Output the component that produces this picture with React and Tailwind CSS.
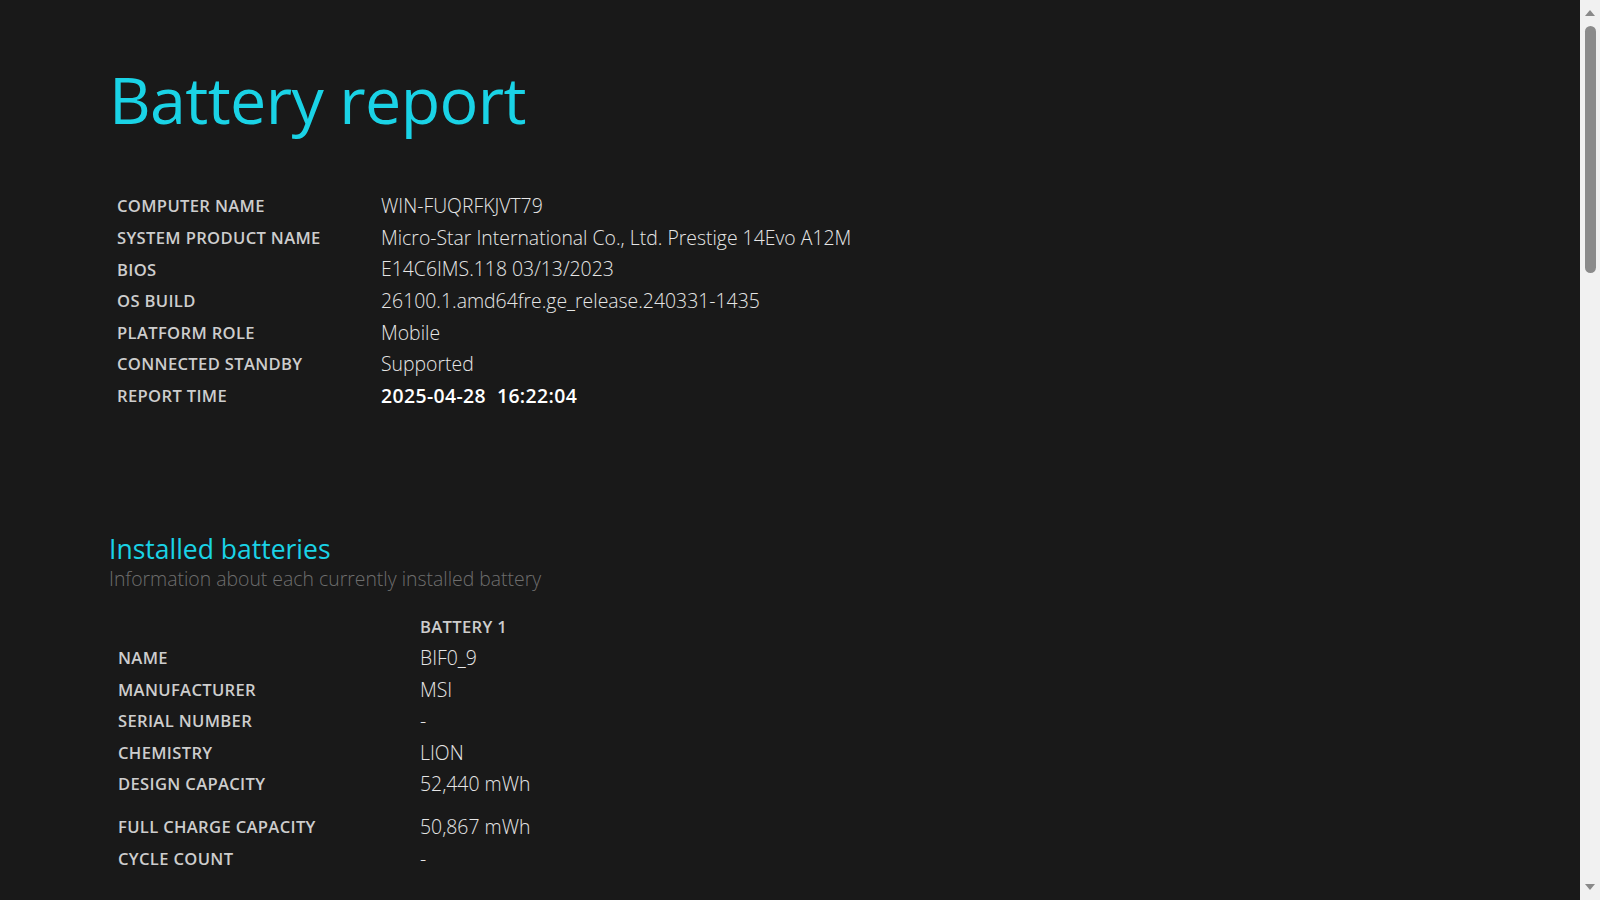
import React from 'react'

const systemInfo = [
    ['COMPUTER NAME', 'WIN-FUQRFKJVT79'],
    ['SYSTEM PRODUCT NAME', 'Micro-Star International Co., Ltd. Prestige 14Evo A12M'],
    ['BIOS', 'E14C6IMS.118 03/13/2023'],
    ['OS BUILD', '26100.1.amd64fre.ge_release.240331-1435'],
    ['PLATFORM ROLE', 'Mobile'],
    ['CONNECTED STANDBY', 'Supported'],
]

const batteryInfo = [
    ['NAME', 'BIF0_9'],
    ['MANUFACTURER', 'MSI'],
    ['SERIAL NUMBER', '-'],
    ['CHEMISTRY', 'LION'],
    ['DESIGN CAPACITY', '52,440 mWh'],
]

function Label({ children }) {
    return (
        <div className="pt-[2px] text-[16.6px] font-semibold tracking-[0.02em] text-[#cdcdcd]">
            {children}
        </div>
    )
}

function Value({ children, strong }) {
    return (
        <div className={strong ? 'text-[19.4px] font-semibold tracking-[0.02em] text-white' : 'text-[19.4px] font-light text-[#e6e6e6]'}>
            {children}
        </div>
    )
}

function Scrollbar() {
    return (
        <div className="w-[20px] h-full bg-[#f1f1f1] flex flex-col items-center">
            <div className="h-[26px] flex items-center justify-center">
                <div className="w-0 h-0 border-l-[5px] border-r-[5px] border-b-[6px] border-l-transparent border-r-transparent border-b-[#8a8a8a]" />
            </div>
            <div className="w-[11px] h-[247px] rounded-full bg-[#8b8b8b]" />
            <div className="flex-1" />
            <div className="h-[26px] flex items-center justify-center">
                <div className="w-0 h-0 border-l-[5px] border-r-[5px] border-t-[6px] border-l-transparent border-r-transparent border-t-[#8a8a8a]" />
            </div>
        </div>
    )
}

export default function App() {
    return (
        <div className="w-full h-screen flex overflow-hidden bg-[#191919]" style={{ fontFamily: '"Open Sans", "Noto Sans", sans-serif' }}>
            <div className="flex-1 pl-[109px] pt-[54px]">
                <h1 className="text-[64.6px] font-normal leading-[90px] text-[#1ad3e6] tracking-[-0.01em]">
                    Battery report
                </h1>

                <div className="mt-[46px] pl-[8px] grid grid-cols-[264px_1fr] auto-rows-[31.6px] items-center">
                    {systemInfo.map(([k, v]) => (
                        <React.Fragment key={k}>
                            <Label>{k}</Label>
                            <Value>{v}</Value>
                        </React.Fragment>
                    ))}
                    <Label>REPORT TIME</Label>
                    <Value strong>2025-04-28 &nbsp;16:22:04</Value>
                </div>

                <h2 className="mt-[121px] text-[26.5px] font-normal leading-[34px] text-[#1ad3e6]">
                    Installed batteries
                </h2>
                <p className="text-[19.4px] font-light leading-[26px] text-[#6e6e6e]">
                    Information about each currently installed battery
                </p>

                <div className="mt-[18px] pl-[9px] grid grid-cols-[302px_1fr] auto-rows-[31.6px] items-center">
                    <div />
                    <Label>BATTERY 1</Label>
                    {batteryInfo.map(([k, v]) => (
                        <React.Fragment key={k}>
                            <Label>{k}</Label>
                            <Value>{v}</Value>
                        </React.Fragment>
                    ))}
                </div>
                <div className="mt-[11px] pl-[9px] grid grid-cols-[302px_1fr] auto-rows-[31.6px] items-center">
                    <Label>FULL CHARGE CAPACITY</Label>
                    <Value>50,867 mWh</Value>
                    <Label>CYCLE COUNT</Label>
                    <Value>-</Value>
                </div>
            </div>
            <Scrollbar />
        </div>
    )
}
